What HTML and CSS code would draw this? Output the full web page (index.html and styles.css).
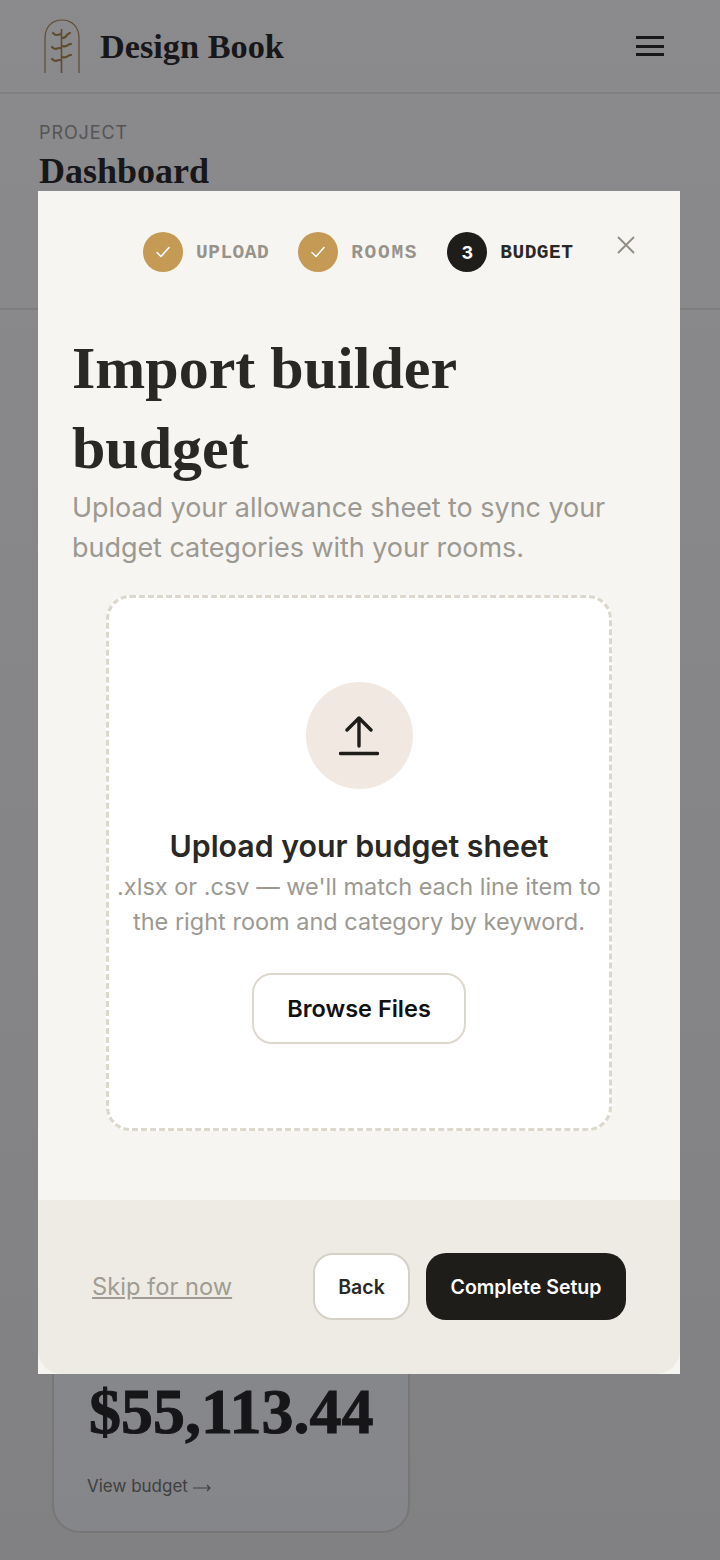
FILE: index.html
```html
<!DOCTYPE html>
<html lang="en">
<head>
    <meta charset="UTF-8">
    <meta name="viewport" content="width=device-width, initial-scale=1.0">
    <title>Design Book</title>
    <link rel="stylesheet" href="styles.css">
</head>
<body>
    <header class="topbar">
        <div class="brand">
            <svg class="brand-logo" viewBox="0 0 36 54" width="36" height="54" fill="none" stroke="#a8844a">
                <path d="M1 54V19C1 8 8 1 18 1s17 7 17 18v35" stroke-width="1.2"/>
                <path d="M17.500 54V10" stroke-width="1.6"/>
                <path d="M17 15c-2 1-4 1-5 1-1 0-2-1-3-2M18 19c3 0 4-1 5-3 1-1 2-2 3-2M17 29c-2 0-4 0-5 1-2 0-3-1-4-2M18 27c3 1 5 0 6-1 1-1 2-1 3-1M17 41c-2 0-4 0-5 1-2 0-3-1-4-2M18 38c3 1 5 0 6-1 1-1 2-1 3-1" stroke-width="2.2" stroke-linecap="round"/>
            </svg>
            <span class="brand-name">Design Book</span>
        </div>
        <button class="menu-btn" aria-label="Menu">
            <span></span><span></span><span></span>
        </button>
    </header>

    <section class="page-head">
        <div class="eyebrow">PROJECT</div>
        <h1 class="page-title">Dashboard</h1>
    </section>

    <main class="cards">
        <div class="card">
            <div class="card-amount">$55,113.44</div>
            <a class="card-link">View budget
                <svg class="card-arrow" viewBox="0 0 18 8" width="18" height="8" fill="none" stroke="#7a7770" stroke-width="1.200"><path d="M0 4h17M14 1l3 3-3 3"/></svg>
            </a>
        </div>
    </main>

    <div class="overlay">
        <div class="modal">
            <div class="steps">
                <div class="step done">
                    <span class="step-dot">
                        <svg viewBox="0 0 16 16" width="16" height="16" fill="none" stroke="#fff" stroke-width="1.600" stroke-linecap="round" stroke-linejoin="round"><path d="M2 8.500l4 4 8-9"/></svg>
                    </span>
                    <span class="step-label">UPLOAD</span>
                </div>
                <div class="step done">
                    <span class="step-dot">
                        <svg viewBox="0 0 16 16" width="16" height="16" fill="none" stroke="#fff" stroke-width="1.600" stroke-linecap="round" stroke-linejoin="round"><path d="M2 8.500l4 4 8-9"/></svg>
                    </span>
                    <span class="step-label step-label-wide">ROOMS</span>
                </div>
                <div class="step active">
                    <span class="step-dot">3</span>
                    <span class="step-label">BUDGET</span>
                </div>
                <button class="close-btn" aria-label="Close">
                    <svg viewBox="0 0 18 18" width="18" height="18" fill="none" stroke="#8f8c85" stroke-width="1.800" stroke-linecap="round"><path d="M1.500 1.500l15 15M16.500 1.500l-15 15"/></svg>
                </button>
            </div>

            <div class="modal-body">
                <h2 class="modal-title">Import builder budget</h2>
                <p class="modal-sub">Upload your allowance sheet to sync your budget categories with your rooms.</p>

                <div class="dropzone">
                    <div class="upload-icon">
                        <svg viewBox="0 0 40 40" width="40" height="40" fill="none" stroke="#1f1d1a" stroke-width="3.400" stroke-linecap="round" stroke-linejoin="round">
                            <path d="M20 30V2M8 14L20 2l12 12M1.500 37.500h37"/>
                        </svg>
                    </div>
                    <div class="drop-title">Upload your budget sheet</div>
                    <p class="drop-sub">.xlsx or .csv — we'll match each line item to the right room and category by keyword.</p>
                    <button class="browse-btn">Browse Files</button>
                </div>
            </div>

            <footer class="modal-foot">
                <a class="skip-link">Skip for now</a>
                <div class="foot-actions">
                    <button class="btn-back">Back</button>
                    <button class="btn-complete">Complete Setup</button>
                </div>
            </footer>
        </div>
    </div>
</body>
</html>
```

FILE: styles.css
```css
* {
    box-sizing: border-box;
}
html, body {
    margin: 0;
    height: 1560px;
    overflow: hidden;
}
body {
    position: relative;
    background-color: #f7f5f1;
    font-family: Inter, sans-serif;
    color: #2a2825;
}
button {
    font-family: Inter, sans-serif;
    cursor: pointer;
}

/* page behind the modal */
.topbar {
    height: 94px;
    padding: 0 56px 0 44px;
    display: flex;
    align-items: center;
    justify-content: space-between;
    border-bottom: 2px solid #e4e1da;
}
.brand {
    display: flex;
    align-items: center;
    gap: 20px;
}
.brand-logo {
    display: block;
}
.brand-name {
    font-family: "Liberation Serif", serif;
    font-weight: 700;
    font-size: 34.300px;
}
.menu-btn {
    width: 28px;
    padding: 0;
    border: none;
    background: none;
    display: flex;
    flex-direction: column;
    gap: 5.500px;
}
.menu-btn span {
    display: block;
    height: 3px;
    background-color: #2a2825;
}
.page-head {
    height: 216px;
    padding: 28px 39px 0;
    border-bottom: 2px solid #e4e1da;
}
.eyebrow {
    font-size: 18px;
    line-height: 22px;
    letter-spacing: 0.900px;
    color: #9a968d;
}
.page-title {
    margin: 7px 0 0;
    font-family: "Liberation Serif", serif;
    font-weight: 700;
    font-size: 36px;
    line-height: 40px;
}
.cards {
    padding: 790px 0 0 52px;
}
.card {
    width: 358px;
    height: 433px;
    padding: 276px 33px 0;
    border: 2px solid #e4e1da;
    border-radius: 28px;
    background-color: #fff;
}
.card-amount {
    font-family: "Liberation Serif", serif;
    font-weight: 700;
    font-size: 64px;
    line-height: 68px;
    margin-left: 2px;
    -webkit-text-stroke: 1px #2a2825;
}
.card-link {
    display: block;
    margin-top: 29px;
    font-size: 17px;
    line-height: 22px;
    color: #7a7770;
}

/* modal */
.overlay {
    position: absolute;
    inset: 0;
    padding: 191px 2px 0 0;
    display: flex;
    justify-content: center;
    align-items: flex-start;
    background: linear-gradient(rgba(0,2,14,0.44), rgba(0,2,10,0.48));
}
.modal {
    width: 642px;
    height: 1183px;
    background-color: #f7f5f1;
    display: flex;
    flex-direction: column;
}
.steps {
    position: relative;
    height: 81px;
    padding: 41px 0 0 105px;
    display: flex;
    align-items: flex-start;
    gap: 29px;
}
.step {
    display: flex;
    align-items: center;
    gap: 13px;
}
.step-dot {
    width: 40px;
    height: 40px;
    border-radius: 50%;
    display: flex;
    align-items: center;
    justify-content: center;
    font-weight: 700;
    font-size: 18px;
}
.done .step-dot {
    background-color: #c49a55;
}
.active .step-dot {
    background-color: #1f1d1a;
    color: #fff;
}
.step-label {
    position: relative;
    top: 1px;
    font-family: "Liberation Mono", monospace;
    font-weight: 700;
    font-size: 19.500px;
    letter-spacing: 0.500px;
    color: #96938b;
}
.step-label-wide {
    letter-spacing: 1.700px;
}
.active .step-label {
    color: #2a2825;
}
.close-btn {
    position: absolute;
    top: 45px;
    right: 45px;
    padding: 0;
    border: none;
    background: none;
    line-height: 0;
}
.modal-body {
    flex: 1;
    padding: 56px 34px 0;
}
.modal-title {
    margin: 0;
    width: 480px;
    font-family: "Liberation Serif", serif;
    font-weight: 700;
    font-size: 60px;
    line-height: 80px;
}
.modal-sub {
    margin: 0 0 27px;
    font-size: 27px;
    line-height: 40px;
    letter-spacing: -0.050px;
    color: #9b9992;
}
.dropzone {
    width: 506px;
    height: 536px;
    margin-left: 34px;
    padding-top: 84px;
    border: 3px dashed #ddd8cc;
    border-radius: 24px;
    background-color: #fff;
    display: flex;
    flex-direction: column;
    align-items: center;
}
.upload-icon {
    width: 107px;
    height: 107px;
    border-radius: 50%;
    background-color: #f1e9e1;
    display: flex;
    align-items: center;
    justify-content: center;
}
.drop-title {
    margin-top: 39px;
    font-size: 30.300px;
    line-height: 36px;
    font-weight: 600;
}
.drop-sub {
    margin: 5px 0 0;
    width: 500px;
    text-align: center;
    font-size: 23.500px;
    line-height: 35px;
    color: #9b9992;
}
.browse-btn {
    width: 214px;
    height: 71px;
    margin-top: 34px;
    border: 2px solid #ddd8cc;
    border-radius: 20px;
    background-color: #fff;
    color: #111;
    font-size: 23.500px;
    font-weight: 600;
}
.modal-foot {
    height: 174px;
    padding: 0 54px 2px;
    background-color: #eeebe4;
    border-radius: 0 0 24px 24px;
    display: flex;
    align-items: center;
    justify-content: space-between;
}
.skip-link {
    font-size: 23.700px;
    color: #a09c93;
    text-decoration: underline;
}
.foot-actions {
    display: flex;
    gap: 16px;
}
.btn-back, .btn-complete {
    height: 67px;
    padding-top: 2px;
    border-radius: 20px;
    font-size: 19.500px;
    font-weight: 600;
}
.btn-back {
    width: 97px;
    border: 2px solid #d6d1c6;
    background-color: #fff;
    color: #2a2825;
}
.btn-complete {
    width: 200px;
    border: none;
    background-color: #1f1d1a;
    color: #fff;
}
```
